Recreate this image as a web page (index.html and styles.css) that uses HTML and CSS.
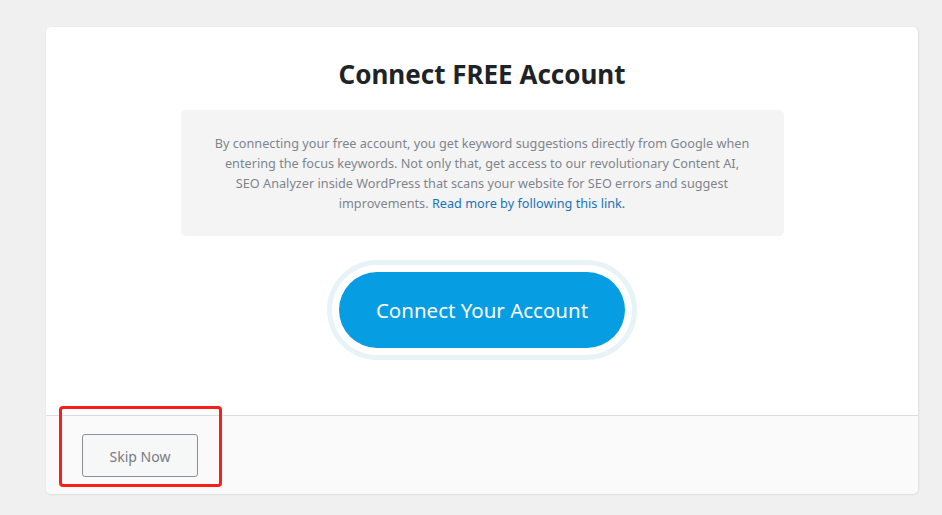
FILE: index.html
```html
<!DOCTYPE html>
<html lang="en">
<head>
<meta charset="utf-8">
<title>Connect FREE Account</title>
<link rel="stylesheet" href="styles.css">
</head>
<body>
<div class="page">
  <div class="card">
    <div class="card-body">
      <h1 class="title">Connect FREE Account</h1>
      <div class="info">
        <p>By connecting your free account, you get keyword suggestions directly from Google when entering the focus keywords. Not only that, get access to our revolutionary Content AI, SEO Analyzer inside WordPress that scans your website for SEO errors and suggest improvements. <a href="#" class="link">Read more by following this link.</a></p>
      </div>
      <div class="cta">
        <a href="#" class="connect-btn">Connect Your Account</a>
      </div>
    </div>
    <div class="card-footer">
      <button class="skip-btn" type="button">Skip Now</button>
      <span class="highlight"></span>
    </div>
  </div>
</div>
</body>
</html>
```
FILE: styles.css
```css
html, body {
  margin: 0;
  padding: 0;
}
body {
  background: #f0f0f1;
  font-family: "Noto Sans", "Open Sans", "Liberation Sans", sans-serif;
  color: #1d2327;
}
.page {
  padding: 27px 24px 20px 46px;
}
.card {
  width: 872px;
  background: #fff;
  border-radius: 5px;
  box-shadow: 0 1px 2px rgba(0, 0, 0, 0.08), 1px 0 2px rgba(0, 0, 0, 0.05);
}
.card-body {
  padding: 31px 0 67px;
  display: flex;
  flex-direction: column;
  align-items: center;
}
.title {
  margin: 0;
  font-size: 26px;
  line-height: 32px;
  font-weight: 700;
  color: #1d2327;
}
.info {
  margin-top: 20px;
  width: 603px;
  box-sizing: border-box;
  background: #f4f4f5;
  border-radius: 5px;
  padding: 23px 0 23px;
  display: flex;
  justify-content: center;
}
.info p {
  margin: 0;
  width: 537px;
  text-align: center;
  font-size: 12.7px;
  line-height: 20px;
  color: #80858c;
}
.link {
  color: #1a73b5;
  text-decoration: none;
}
.cta {
  margin-top: 36px;
}
.connect-btn {
  display: flex;
  align-items: center;
  justify-content: center;
  width: 286px;
  height: 76px;
  border-radius: 38px;
  background: #069de3;
  color: #fff;
  font-size: 20.5px;
  text-decoration: none;
  box-shadow: 0 0 0 7px #fff, 0 0 0 12px #e8f3f8;
}
.card-footer {
  position: relative;
  border-top: 1px solid #dcdcde;
  background: #fafafa;
  border-radius: 0 0 5px 5px;
  padding: 18px 36px 17px;
}
.skip-btn {
  display: block;
  width: 116px;
  height: 43px;
  padding-top: 2px;
  border: 1px solid #8c8f94;
  border-radius: 3px;
  background: #f6f7f7;
  color: #767b83;
  font-family: inherit;
  font-size: 14px;
  cursor: pointer;
}
.highlight {
  position: absolute;
  left: 13px;
  top: -10px;
  width: 157px;
  height: 75px;
  border: 3px solid #fa1d1a;
  border-radius: 4px;
  pointer-events: none;
}
```
